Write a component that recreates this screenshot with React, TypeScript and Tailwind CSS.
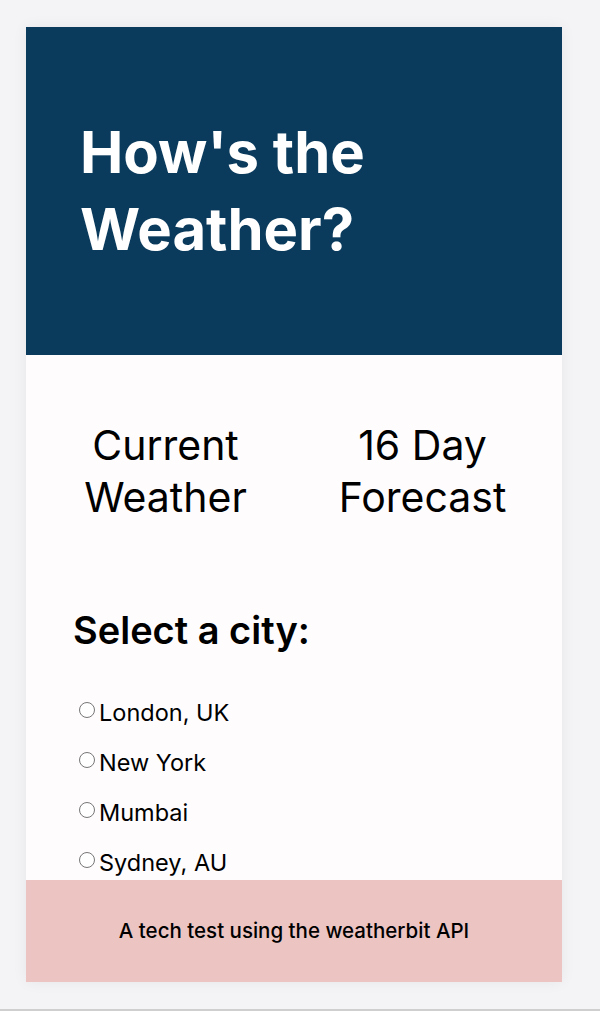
const cities = ["London, UK", "New York", "Mumbai", "Sydney, AU"];

export default function App() {
  return (
    <div className="relative min-h-[1011px] bg-[#f4f3f5] pt-[27px] font-['Inter',sans-serif] text-black">
      <div className="ml-[26px] flex h-[955px] w-[536px] flex-col bg-[#fffcfe] shadow-[0_0_14px_rgba(0,0,0,0.06)]">
        <header className="flex h-[328px] shrink-0 items-center bg-[#0b3b5c] px-[54px]">
          <h1 className="text-[58px] font-bold leading-[77px] text-white">
            How's the
            <br />
            Weather?
          </h1>
        </header>

        <main className="flex-1 overflow-hidden">
          <nav className="grid grid-cols-2 px-[11px] pt-[64px]">
            <button type="button" className="text-center text-[41px] leading-[52px]">
              Current
              <br />
              Weather
            </button>
            <button type="button" className="text-center text-[41px] leading-[52px]">
              16 Day
              <br />
              Forecast
            </button>
          </nav>

          <section className="px-[47px] pt-[85px]">
            <h2 className="text-[38px] font-semibold leading-[44px]">Select a city:</h2>
            <div className="mt-[47px] flex flex-col gap-[22px] pl-[6px]">
              {cities.map((city) => (
                <label key={city} className="flex items-start gap-[4px] text-[23.5px] leading-[28px]">
                  <input
                    type="radio"
                    name="city"
                    className="mt-[3px] h-[16px] w-[16px] appearance-none rounded-full border border-[#767676] bg-white"
                  />
                  {city}
                </label>
              ))}
            </div>
          </section>
        </main>

        <footer className="flex h-[102px] shrink-0 items-center justify-center bg-[#ecc5c3]">
          <p className="text-[20.5px] font-medium">A tech test using the weatherbit API</p>
        </footer>
      </div>
      <div className="absolute bottom-0 left-0 h-[2px] w-full bg-[#cfcfcf]" />
    </div>
  );
}
